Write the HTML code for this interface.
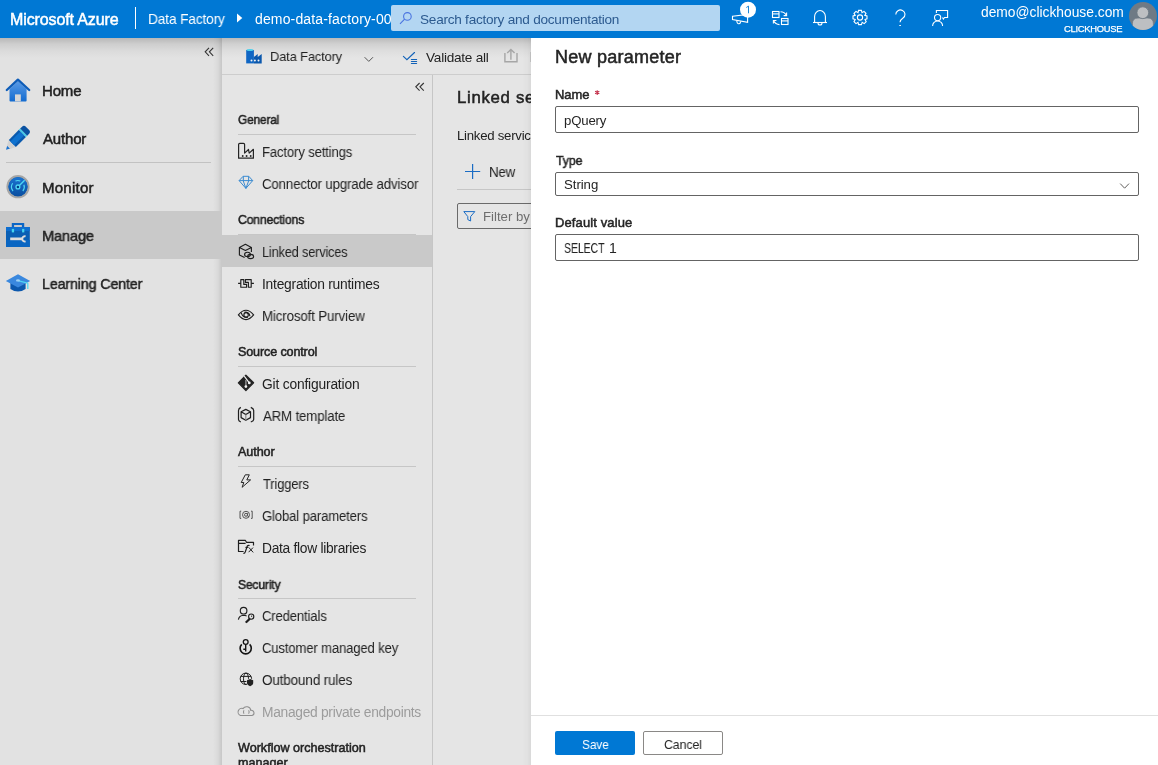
<!DOCTYPE html>
<html><head><meta charset="utf-8">
<style>
*{box-sizing:border-box;margin:0;padding:0}
html,body{width:1158px;height:765px;overflow:hidden;background:#e4e4e4;font-family:"Liberation Sans",sans-serif;color:#222}
.t{position:absolute;white-space:nowrap;line-height:1;will-change:transform}
.b{position:absolute}
#ico{position:absolute;left:0;top:0;width:1158px;height:765px;z-index:20;pointer-events:none}
</style></head><body>
<!-- backgrounds -->
<div class="b" style="left:0;top:38px;width:222px;height:727px;background:#e2e2e2"></div>
<div class="b" style="left:213px;top:38px;width:9px;height:727px;background:linear-gradient(to right,rgba(0,0,0,0) 0%,rgba(0,0,0,.04) 55%,rgba(0,0,0,.12) 100%)"></div>
<div class="b" style="left:6px;top:162px;width:205px;height:1px;background:#c2c2c2"></div>
<div class="b" style="left:0;top:211px;width:222px;height:48px;background:#c9c9c9"></div>
<div class="b" style="left:222px;top:38px;width:310px;height:727px;background:#e5e5e5"></div>
<div class="b" style="left:222px;top:74px;width:310px;height:1px;background:#cdcdcd"></div>
<div class="b" style="left:432px;top:75px;width:1px;height:690px;background:#c6c6c6"></div>
<div class="b" style="left:222px;top:235px;width:210px;height:32px;background:#c9c9c9"></div>
<div class="b" style="left:238px;top:134px;width:178px;height:1px;background:#c6c6c6"></div>
<div class="b" style="left:238px;top:234px;width:178px;height:1px;background:#c6c6c6"></div>
<div class="b" style="left:238px;top:366px;width:178px;height:1px;background:#c6c6c6"></div>
<div class="b" style="left:238px;top:466px;width:178px;height:1px;background:#c6c6c6"></div>
<div class="b" style="left:238px;top:598px;width:178px;height:1px;background:#c6c6c6"></div>
<div class="b" style="left:457px;top:189px;width:80px;height:1px;background:#c6c6c6"></div>
<div class="b" style="left:457px;top:203px;width:90px;height:26px;border:1px solid #6a6a6a;border-radius:2px"></div>
<div class="b" style="left:0;top:38px;width:531px;height:20px;background:linear-gradient(to bottom,rgba(0,0,0,.19) 0%,rgba(0,0,0,.09) 30%,rgba(0,0,0,.03) 65%,rgba(0,0,0,0) 100%)"></div>
<!-- left texts -->
<div class="t" style="left:41.7px;top:83px;font-size:15px;color:#222222;letter-spacing:-0.15px;transform:scaleX(0.9974);transform-origin:0 0;-webkit-text-stroke:0.5px #222222;">Home</div><div class="t" style="left:42.7px;top:131px;font-size:15px;color:#222222;letter-spacing:-0.18px;-webkit-text-stroke:0.5px #222222;">Author</div><div class="t" style="left:42.0px;top:180px;font-size:15px;color:#222222;letter-spacing:0.267px;-webkit-text-stroke:0.5px #222222;">Monitor</div><div class="t" style="left:42.03px;top:228px;font-size:15px;color:#222222;letter-spacing:-0.15px;transform:scaleX(0.9731);transform-origin:0 0;-webkit-text-stroke:0.5px #222222;">Manage</div><div class="t" style="left:42.05px;top:276px;font-size:15px;color:#222222;letter-spacing:-0.15px;transform:scaleX(0.9514);transform-origin:0 0;-webkit-text-stroke:0.5px #222222;">Learning Center</div>
<div class="t" style="left:269.85px;top:50px;font-size:13.6px;color:#222222;letter-spacing:-0.15px;transform:scaleX(0.948);transform-origin:0 0;">Data Factory</div><div class="t" style="left:425.5px;top:51px;font-size:13.6px;color:#222222;letter-spacing:-0.245px;">Validate all</div>
<div class="t" style="left:238.3px;top:114px;font-size:12.6px;color:#222222;letter-spacing:-0.15px;transform:scaleX(0.9409);transform-origin:0 0;-webkit-text-stroke:0.5px #222222;">General</div><div class="t" style="left:238.3px;top:214px;font-size:12.6px;color:#222222;letter-spacing:-0.15px;transform:scaleX(0.9681);transform-origin:0 0;-webkit-text-stroke:0.5px #222222;">Connections</div><div class="t" style="left:238.3px;top:346px;font-size:12.6px;color:#222222;letter-spacing:-0.146px;-webkit-text-stroke:0.5px #222222;">Source control</div><div class="t" style="left:238.3px;top:446px;font-size:12.6px;color:#222222;letter-spacing:-0.08px;-webkit-text-stroke:0.5px #222222;">Author</div><div class="t" style="left:238.3px;top:579px;font-size:12.6px;color:#222222;letter-spacing:-0.15px;transform:scaleX(0.9578);transform-origin:0 0;-webkit-text-stroke:0.5px #222222;">Security</div><div class="t" style="left:238.3px;top:742px;font-size:12.6px;color:#222222;-webkit-text-stroke:0.5px #222222;">Workflow orchestration</div><div class="t" style="left:238.3px;top:757px;font-size:12.6px;color:#222222;-webkit-text-stroke:0.5px #222222;">manager</div>
<div class="t" style="left:261.55px;top:146px;font-size:13.8px;color:#222222;letter-spacing:-0.15px;transform:scaleX(0.9489);transform-origin:0 0;">Factory settings</div><div class="t" style="left:261.54px;top:178px;font-size:13.8px;color:#222222;letter-spacing:-0.15px;transform:scaleX(0.9605);transform-origin:0 0;">Connector upgrade advisor</div><div class="t" style="left:261.58px;top:246px;font-size:13.8px;color:#222222;letter-spacing:-0.15px;transform:scaleX(0.9207);transform-origin:0 0;">Linked services</div><div class="t" style="left:261.5px;top:278px;font-size:13.8px;color:#222222;letter-spacing:-0.232px;">Integration runtimes</div><div class="t" style="left:261.53px;top:310px;font-size:13.8px;color:#222222;letter-spacing:-0.15px;transform:scaleX(0.966);transform-origin:0 0;">Microsoft Purview</div><div class="t" style="left:261.5px;top:378px;font-size:13.8px;color:#222222;letter-spacing:-0.181px;">Git configuration</div><div class="t" style="left:262.5px;top:410px;font-size:13.8px;color:#222222;letter-spacing:-0.15px;transform:scaleX(0.96);transform-origin:0 0;">ARM template</div><div class="t" style="left:262.5px;top:478px;font-size:13.8px;color:#222222;letter-spacing:-0.15px;transform:scaleX(0.9347);transform-origin:0 0;">Triggers</div><div class="t" style="left:261.55px;top:510px;font-size:13.8px;color:#222222;letter-spacing:-0.15px;transform:scaleX(0.95);transform-origin:0 0;">Global parameters</div><div class="t" style="left:261.5px;top:542px;font-size:13.8px;color:#222222;letter-spacing:-0.294px;">Data flow libraries</div><div class="t" style="left:261.55px;top:610px;font-size:13.8px;color:#222222;letter-spacing:-0.15px;transform:scaleX(0.9478);transform-origin:0 0;">Credentials</div><div class="t" style="left:261.55px;top:642px;font-size:13.8px;color:#222222;letter-spacing:-0.15px;transform:scaleX(0.9483);transform-origin:0 0;">Customer managed key</div><div class="t" style="left:261.52px;top:674px;font-size:13.8px;color:#222222;letter-spacing:-0.15px;transform:scaleX(0.978);transform-origin:0 0;">Outbound rules</div><div class="t" style="left:261.5px;top:706px;font-size:13.8px;color:#9c9c9c;letter-spacing:-0.3px;">Managed private endpoints</div>
<div class="t" style="left:457.1px;top:90px;font-size:16.8px;color:#222222;-webkit-text-stroke:0.5px #222222;letter-spacing:0.7px;">Linked services</div><div class="t" style="left:457.1px;top:129px;font-size:13.2px;color:#222222;letter-spacing:-0.25px;">Linked services are</div><div class="t" style="left:488.93px;top:166px;font-size:13.8px;color:#222222;letter-spacing:-0.15px;transform:scaleX(0.9654);transform-origin:0 0;">New</div><div class="t" style="left:482.6px;top:210px;font-size:13.2px;color:#6e6e6e;">Filter by name</div>
<!-- header -->
<div class="b" style="left:0;top:0;width:1158px;height:38px;background:#0078d4"></div>
<div class="b" style="left:135px;top:7px;width:1px;height:22px;background:#fff"></div>
<div class="t" style="left:10.0px;top:12px;font-size:16px;color:#ffffff;letter-spacing:-0.121px;-webkit-text-stroke:0.5px #ffffff;">Microsoft Azure</div><div class="t" style="left:148.15px;top:12px;font-size:14.4px;color:#ffffff;letter-spacing:-0.15px;transform:scaleX(0.9525);transform-origin:0 0;">Data Factory</div><div class="t" style="left:255.0px;top:12px;font-size:14px;color:#ffffff;letter-spacing:0.147px;">demo-data-factory-00</div>
<div class="b" style="left:391px;top:5px;width:329px;height:26px;background:#b3d6f2;border-radius:2px"></div>
<div class="t" style="left:420.3px;top:13px;font-size:13.6px;color:#2c5a8f;letter-spacing:-0.248px;">Search factory and documentation</div><div class="t" style="left:980.9px;top:6px;font-size:13.8px;color:#ffffff;">demo@clickhouse.com</div><div class="t" style="left:1064.3px;top:24px;font-size:9.4px;color:#ffffff;letter-spacing:-0.267px;-webkit-text-stroke:0.5px #ffffff;-webkit-text-stroke:0.25px #fff;">CLICKHOUSE</div>
<div class="b" style="left:530px;top:52px;width:1px;height:10px;background:#c8c8c8"></div>
<!-- panel -->
<div class="b" style="left:522px;top:38px;width:9px;height:727px;background:linear-gradient(to right,rgba(0,0,0,0) 0%,rgba(0,0,0,.015) 60%,rgba(0,0,0,.05) 100%)"></div>
<div class="b" style="left:531px;top:38px;width:627px;height:727px;background:#fff"></div>
<div class="b" style="left:531px;top:715px;width:627px;height:1px;background:#e0e0e0"></div>
<div class="b" style="left:555px;top:106px;width:584px;height:27px;border:1px solid #646464;border-radius:2px"></div>
<div class="b" style="left:555px;top:172px;width:584px;height:24px;border:1px solid #646464;border-radius:2px"></div>
<div class="b" style="left:555px;top:234px;width:584px;height:27px;border:1px solid #646464;border-radius:2px"></div>
<div class="b" style="left:555px;top:731px;width:80px;height:24px;background:#0078d4;border-radius:2px"></div>
<div class="b" style="left:643px;top:731px;width:80px;height:24px;border:1px solid #8a8886;border-radius:2px"></div>
<div class="t" style="left:555.2px;top:48px;font-size:18px;color:#242424;letter-spacing:0.25px;-webkit-text-stroke:0.5px #242424;">New parameter</div><div class="t" style="left:555.2px;top:88px;font-size:13px;color:#242424;letter-spacing:-0.067px;-webkit-text-stroke:0.5px #242424;">Name</div><div class="t" style="left:564.2px;top:114px;font-size:13.2px;color:#242424;letter-spacing:-0.18px;">pQuery</div><div class="t" style="left:556.3px;top:154px;font-size:13px;color:#242424;letter-spacing:-0.15px;transform:scaleX(0.9536);transform-origin:0 0;-webkit-text-stroke:0.5px #242424;">Type</div><div class="t" style="left:563.8px;top:178px;font-size:13.2px;color:#242424;letter-spacing:-0.04px;">String</div><div class="t" style="left:555.3px;top:216px;font-size:13px;color:#242424;letter-spacing:0.117px;-webkit-text-stroke:0.5px #242424;">Default value</div><div class="t" style="left:564.25px;top:241px;font-size:14px;color:#242424;letter-spacing:-0.15px;transform:scaleX(0.7528);transform-origin:0 0;">SELECT</div><div class="t" style="left:608.9px;top:241px;font-size:14px;color:#242424;">1</div><div class="t" style="left:581.79px;top:738px;font-size:13.2px;color:#ffffff;letter-spacing:-0.15px;transform:scaleX(0.9071);transform-origin:0 0;">Save</div><div class="t" style="left:663.96px;top:738px;font-size:13.2px;color:#242424;letter-spacing:-0.15px;transform:scaleX(0.941);transform-origin:0 0;">Cancel</div>
<svg id="ico" viewBox="0 0 1158 765">
<defs>
<linearGradient id="gb" x1="0" y1="0" x2="0" y2="1"><stop offset="0" stop-color="#5a9be6"/><stop offset="1" stop-color="#136bd0"/></linearGradient>
<linearGradient id="gm" x1="0" y1="0" x2="0" y2="1"><stop offset="0" stop-color="#1a73d1"/><stop offset="1" stop-color="#0b4fa0"/></linearGradient>
</defs>
<!-- header icons -->
<path d="M237 13.5 L242.3 18 L237 22.6Z" fill="#fff"/>
<g fill="none" stroke="#4a74e0" stroke-width="1.1"><circle cx="407.4" cy="16.4" r="3.8"/><path d="M404.6 19.2 L400 23.8"/></g>
<g fill="none" stroke="#fff" stroke-width="1.1">
<path d="M732.5 16.2 L747.6 14.4 V22.3 L732.5 19.6Z"/>
<path d="M736.7 20.5 Q737 23.7 738.7 23.7 Q740.4 23.7 740.8 21.3"/>
</g>
<circle cx="748" cy="9.7" r="8" fill="#fff"/>
<path d="M746.3 7.5 L748.5 6.1 V13.3" fill="none" stroke="#0078d4" stroke-width="0.9"/>
<g fill="none" stroke="#fff" stroke-width="1.1">
<rect x="772.5" y="11.5" width="6.5" height="6"/><path d="M772.5 13.9 H779"/>
<rect x="781.5" y="18.5" width="6.5" height="6"/><path d="M781.5 20.9 H788"/>
<path d="M780.5 11.8 Q784.5 11.8 786.5 15.5"/><path d="M783.6 15.6 H786.6 V12.6"/>
<path d="M779.5 24.6 Q775.5 24.6 773.4 20.6"/><path d="M776.4 20.5 H773.4 V23.5"/>
</g>
<g fill="none" stroke="#fff" stroke-width="1.1">
<path d="M814.6 22.5 V16.5 A5.4 6 0 0 1 825.4 16.5 V22.5"/><path d="M813 22.5 H827"/><path d="M818 23 A2 2 0 0 0 822 23"/>
</g>
<g fill="none" stroke="#fff" stroke-width="1.1">
<path d="M858.6 10.4 L861.4 10.4 L862 12.6 L864 11.4 L866 13.4 L864.8 15.4 L867 16 L867 18.8 L865 19.6 L866.2 21.6 L864.2 23.6 L862.2 22.4 L861.4 24.6 L858.6 24.6 L858 22.4 L856 23.6 L854 21.6 L855.2 19.6 L853 18.8 L853 16 L855.2 15.4 L854 13.4 L856 11.4 L858 12.6Z"/>
<circle cx="860" cy="17.5" r="2.6"/>
</g>
<g fill="none" stroke="#fff" stroke-width="1.1">
<path d="M895.8 14.5 A4.6 4.4 0 1 1 903 18 Q900 20 900 22.3"/><path d="M899.3 25.5 H900.9"/>
</g>
<g fill="none" stroke="#fff" stroke-width="1.1">
<path d="M936.4 13 V10.5 H947.6 V17.5 H944.5 L943.4 19 L942.5 17.5"/>
<circle cx="937.6" cy="17.6" r="3.1"/>
<path d="M932.6 26 A5 5 0 0 1 942.6 26"/>
</g>
<clipPath id="avc"><circle cx="1143" cy="16" r="14"/></clipPath>
<circle cx="1143" cy="16" r="14" fill="#6f7a85"/>
<g clip-path="url(#avc)">
<path d="M1132.4 30.5 V23.6 Q1132.4 18 1138 18 H1147.8 Q1153.4 18 1153.4 23.6 V30.5Z" fill="#bdbfc2" stroke="#6f7a85" stroke-width="0.8"/>
<circle cx="1142.8" cy="12.7" r="5.9" fill="#bdbfc2" stroke="#6f7a85" stroke-width="0.9"/>
</g>
<!-- collapse chevrons -->
<g fill="none" stroke="#333" stroke-width="1.1">
<path d="M209 47.8 L205.2 51.8 L209 55.8 M213.2 47.8 L209.4 51.8 L213.2 55.8"/>
<path d="M419.6 83 L415.8 86.8 L419.6 90.6 M423.8 83 L420 86.8 L423.8 90.6"/>
</g>
<!-- left nav icons -->
<g>
<path d="M9.5 89 L17.9 81 L26.6 89 V100.4 Q26.6 101.4 25.6 101.4 H10.5 Q9.5 101.4 9.5 100.4Z" fill="url(#gb)"/>
<path d="M6.8 90 L17.9 79.6 L29.2 90" fill="none" stroke="#0d5cb8" stroke-width="2.3" stroke-linecap="round" stroke-linejoin="round"/>
<rect x="15" y="94.4" width="5.8" height="7" fill="#d6d6d6"/>
</g>
<g transform="rotate(-45 6 149.8)">
<path d="M6 149.8 L10 147.6 V152 Z" fill="#1a72d0"/>
<path d="M9.6 147.4 L15 144.8 V154.8 L9.6 152.2Z" fill="#d2d2d2"/>
<rect x="15" y="144.8" width="14.2" height="10" fill="#0a5aae"/>
<rect x="15" y="147" width="14.2" height="5.4" fill="#0f72cf"/>
<rect x="29.2" y="144.8" width="1.8" height="10" fill="#45cde8"/>
<path d="M31 144.8 H33.4 Q36.4 144.8 36.4 147.8 V151.8 Q36.4 154.8 33.4 154.8 H31Z" fill="#0a52a2"/>
</g>
<g>
<circle cx="18" cy="186.7" r="10.6" fill="#0c5fb8" stroke="#a6a6a6" stroke-width="2"/>
<circle cx="18" cy="186.7" r="9.5" fill="url(#gm)"/>
<g fill="none" stroke="#4fd6f2" stroke-width="1.2">
<path d="M12.66 183.23 A6.4 6.4 0 0 0 13.0 191.0"/>
<path d="M20.3 180.97 A6.4 6.4 0 0 0 15.5 180.97"/>
<path d="M23.91 184.71 A6.4 6.4 0 0 1 22.8 191.0"/>
<path d="M19.1 185.7 L24.6 180.2" stroke-width="1.4"/>
</g>
<circle cx="17.9" cy="186.9" r="1.9" fill="#003c84" stroke="#4fd6f2" stroke-width="1.3"/>
</g>
<g>
<path d="M11.8 227.2 V223 H24.2 V227.2 H21.9 V225.1 H14.1 V227.2Z" fill="#0b66c6"/>
<rect x="6" y="227" width="23.8" height="19.9" fill="#0a5fb4"/>
<rect x="6" y="227" width="23.8" height="4" fill="#0d6ed0"/>
<rect x="6" y="240" width="23.8" height="6.9" fill="#0a66c2"/>
<rect x="11.8" y="228.9" width="2.3" height="3.5" fill="#45d4ee"/>
<rect x="22.1" y="228.9" width="2.2" height="3.5" fill="#45d4ee"/>
<rect x="10.2" y="237.5" width="11.8" height="2.7" fill="#dcdcdc"/>
<path d="M25.6 236.4 A2.6 2.6 0 1 0 25.6 241.4" fill="none" stroke="#dcdcdc" stroke-width="2"/>
</g>
<g>
<path d="M10.4 283 V289 Q18 294 25.6 289 V283Z" fill="#0c58ad"/>
<path d="M5.8 281 L18 274.2 L30.2 281 L18 287.6Z" fill="#3a88de"/>
<path d="M18 280.6 L27.8 283.2 V289" fill="none" stroke="#50d8f4" stroke-width="1.3"/>
<ellipse cx="18" cy="280.4" rx="2" ry="1.2" fill="#9fd0f5"/>
</g>
<!-- toolbar icons -->
<g>
<rect x="246.2" y="50" width="7.7" height="13.4" fill="#0f66c4"/>
<ellipse cx="250" cy="50" rx="3.4" ry="1.1" fill="#4fd0ec"/>
<path d="M253.9 63.4 V57.1 L257.7 53.9 V57.1 L261.7 53.9 V63.4Z" fill="#0b58ad"/>
<circle cx="251.5" cy="60.5" r="1" fill="#f2f2f2"/><circle cx="254.9" cy="60.5" r="1" fill="#f2f2f2"/><circle cx="258.5" cy="60.5" r="1" fill="#f2f2f2"/>
</g>
<path d="M364.6 57.2 L368.8 61.4 L373 57.2" fill="none" stroke="#555" stroke-width="1"/>
<g fill="none" stroke="#1262b8" stroke-width="1.15" stroke-linecap="round">
<path d="M403.4 56.4 L406.9 59.6 L414.5 52.5"/>
<path d="M411.4 59.5 H416.6 M411.4 61.5 H416.6 M411.4 63.5 H416.6"/>
</g>
<g fill="none" stroke="#a6a6a6" stroke-width="1.4">
<path d="M510.9 59.7 V50 M507.2 53 L510.9 49.5 L514.6 53"/>
<path d="M504.9 53.1 V61.8 H517 V53.1"/>
</g>
<!-- sub nav icons -->
<g fill="none" stroke="#242424" stroke-width="1.2" stroke-linejoin="round">
<path d="M238.6 158.2 V144.6 Q238.6 143.4 239.8 143.4 H243.4 Q244.6 143.4 244.6 144.6 V153.1 L248.5 149.5 L249.2 153.1 L253.4 149.3 V158.2Z"/>
</g>
<g fill="#242424"><circle cx="242.7" cy="156" r="0.95"/><circle cx="246.6" cy="156" r="0.95"/><circle cx="250.7" cy="156" r="0.95"/></g>
<g fill="none" stroke="#3a8ad0" stroke-width="1" stroke-linejoin="round">
<path d="M243.1 176.3 H248.8 L252.7 180.6 L245.9 188.4 L239.1 180.6Z M239.1 180.6 H252.7 M243.3 176.3 V181 L245.9 188.4 L248.6 181 V176.3"/>
</g>
<g fill="none" stroke="#1e1e1e" stroke-width="1.15" stroke-linejoin="round">
<path d="M239.4 247.4 L245.4 244.3 L251.4 247.4 L245.4 250.5Z M239.4 247.4 V254.9 L244.6 257.6 M251.4 247.4 V252"/>
<ellipse cx="247.5" cy="254.4" rx="2.9" ry="2.1"/>
<ellipse cx="250.6" cy="256.45" rx="3" ry="2.15"/>
</g>
<g fill="none" stroke="#1e1e1e" stroke-width="1.15" stroke-linejoin="round">
<path d="M238.1 283.4 H240.8 M251.2 283.4 H253.9"/>
<path d="M240.8 279.6 H243.8 V284.4 H246.6 V287.2 H240.8Z"/>
<path d="M245.4 279.6 H251.2 V287.2 H248.4 V282.4 H245.4Z"/>
</g>
<g fill="none" stroke="#1e1e1e" stroke-width="1.15">
<path d="M238.4 314.9 Q246 305.6 253.6 314.9 Q246 324.2 238.4 314.9Z"/>
<circle cx="246.1" cy="314.9" r="2.2"/>
<path d="M241.2 312.6 Q242.6 317.8 247.8 317.4"/>
<path d="M244.4 312.2 Q249.4 312.0 249.9 316.2"/>
</g>
<path d="M245.9 375.2 L253.6 382.8 L245.9 390.5 L238.3 382.8Z" fill="#242424" stroke="#242424" stroke-width="1.2" stroke-linejoin="round"/>
<g fill="none" stroke="#f0f0f0" stroke-width="1.15"><path d="M244.2 376.2 L249.3 382.9"/></g>
<path d="M245.9 380 V386.4" stroke="#a8a8a8" stroke-width="1.2"/>
<g fill="#f4f4f4"><circle cx="249.3" cy="382.9" r="1.35"/><circle cx="245.9" cy="386.6" r="1.35"/></g>
<g fill="none" stroke="#1e1e1e" stroke-width="1.2" stroke-linejoin="round">
<path d="M240.8 407.4 Q238.5 408.6 238.5 410.4 V419.4 Q238.5 421 240.8 422 M250.8 407.4 Q253.7 408.6 253.7 410.4 V419.4 Q253.7 421 250.8 422"/>
<path d="M245.8 409.4 L250.5 411.7 V417.6 L245.8 420.2 L241.1 417.6 V411.7Z M241.1 411.7 L245.8 414.4 L250.5 411.7"/>
</g>
<path d="M245.8 414.6 V420" stroke="#8a8a8a" stroke-width="1.2"/>
<path d="M245.3 474.8 H249.3 L246.8 479.9 H250.6 L242.1 487.3 L243.8 482.5 H241.2Z" fill="none" stroke="#242424" stroke-width="1" stroke-linejoin="round"/>
<g fill="none" stroke="#555" stroke-width="1">
<path d="M241.2 511.2 H240 V518.4 H241.2 M251 511.2 H252.2 V518.4 H251"/>
<circle cx="246" cy="514.8" r="3.5"/>
<circle cx="246" cy="514.8" r="1.5"/>
<path d="M247.5 513.2 V515.6 Q247.6 516.8 249 516.6"/>
</g>
<g fill="none" stroke="#1e1e1e" stroke-width="1.2" stroke-linejoin="round">
<path d="M243.6 551.5 H238.5 V540.3 H245.3 L246.5 542.3 H253.5 V545.6 M238.5 543.4 H245.6"/>
<path d="M243.4 553.4 Q244.8 553.6 245.4 551.6 L247.2 546.2 Q248 545 249.6 545.5"/>
<path d="M245.4 547.4 H248.2" stroke-width="1"/>
<path d="M248.8 547.4 L253.2 552.4 M253 547.6 L248.6 552.2" stroke-width="1"/>
</g>
<g fill="none" stroke="#1e1e1e" stroke-width="1.15">
<circle cx="243.6" cy="610.7" r="3.3"/>
<path d="M238.4 619.6 Q239.2 615.4 243.6 615.2 Q245.4 615.3 246.6 616"/>
<circle cx="251.2" cy="616.6" r="2.6"/>
<path d="M249.4 618.4 L245.8 622 L246.6 622.6 L250.2 619.2"/>
</g>
<circle cx="251.6" cy="616.2" r="0.6" fill="#1e1e1e"/>
<g fill="none" stroke="#141414">
<path d="M241.74 644.34 A5.6 5.6 0 1 0 249.66 644.34" stroke-width="1.6"/>
<circle cx="245.7" cy="642" r="2.4" stroke-width="1.3"/>
<path d="M245.7 644.4 V651.6 M243.3 649.3 H245.7" stroke-width="1.4"/>
</g>
<g fill="none" stroke="#1e1e1e" stroke-width="1">
<circle cx="245.9" cy="678.8" r="5.7"/>
<ellipse cx="246" cy="678.8" rx="2.5" ry="5.7"/>
<path d="M240.6 676.4 H251 M240.6 681.5 H247.5"/>
</g>
<path d="M247 680.3 L250.1 678.9 L253.2 680.3 V682.8 Q253.2 685.3 250.1 686.2 Q247 685.3 247 682.8Z" fill="#222" stroke="#e5e5e5" stroke-width="1.2" paint-order="stroke"/>
<g fill="none" stroke="#8e8e8e" stroke-width="1.05">
<path d="M240.4 715.4 H252 A2.5 2.5 0 0 0 250.8 710.4 A4.3 4.3 0 0 0 243 708.6 A3.4 3.4 0 0 0 240.4 715.4Z"/>
<path d="M244 710.2 Q242.8 712 244 713.8 M248.6 710.2 Q249.8 712 248.6 713.8"/>
</g>
<!-- main icons -->
<path d="M472.6 164 V179 M465 171.5 H480.2" stroke="#1a6cc4" stroke-width="1.2" fill="none"/>
<path d="M463.8 211.6 H474.8 L470.6 216.6 V221 L467.8 219.6 V216.6Z" fill="none" stroke="#1a6cc4" stroke-width="1"/>
<!-- panel icons -->
<path d="M1120.2 183.6 L1124.6 188.2 L1129 183.6" fill="none" stroke="#605e5c" stroke-width="1"/>
<path d="M597.2 90.2 V94.9 M595.1 91.3 L599.3 93.8 M595.1 93.8 L599.3 91.3" stroke="#c4314b" stroke-width="1.1"/>
</svg>
</body></html>
